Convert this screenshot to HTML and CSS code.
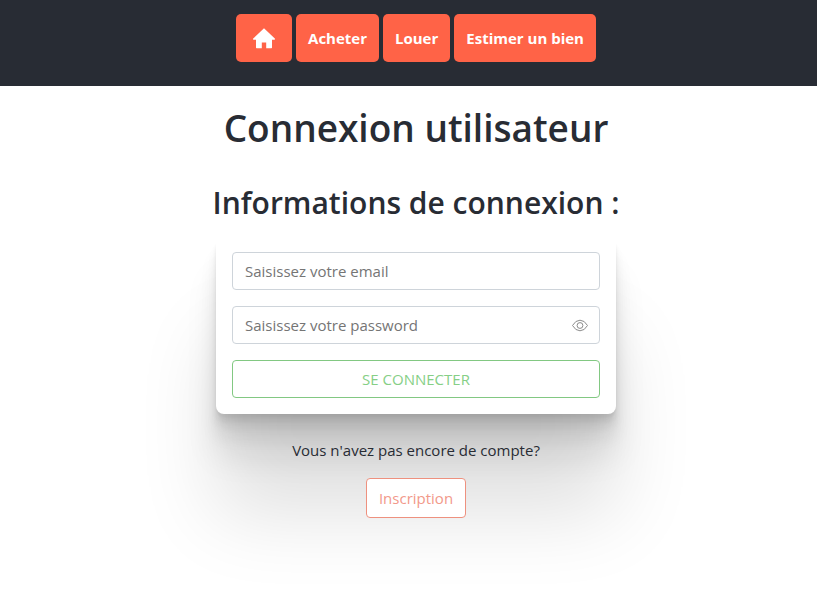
FILE: index.html
```html
<!DOCTYPE html>
<html lang="fr">
<head>
  <meta charset="utf-8">
  <meta name="viewport" content="width=device-width, initial-scale=1">
  <title>Connexion utilisateur</title>
  <link rel="stylesheet" href="styles.css">
</head>
<body>
  <header class="site-header">
    <nav class="nav">
      <a class="nav-link nav-home" href="#" aria-label="Accueil">
        <svg class="home-icon" viewBox="0 0 24 24" aria-hidden="true"><path d="M12 2.2 22.8 12.6Q23.4 13.5 22.3 13.7H20V21.6Q20 22.2 19.4 22.2H14.2V16.6H9.8V22.2H4.6Q4 22.2 4 21.6V13.7H1.7Q.6 13.5 1.2 12.6Z"/></svg>
      </a>
      <a class="nav-link" href="#">Acheter</a>
      <a class="nav-link" href="#">Louer</a>
      <a class="nav-link" href="#">Estimer un bien</a>
    </nav>
  </header>
  <main class="page">
    <h1 class="title">Connexion utilisateur</h1>
    <h2 class="subtitle">Informations de connexion :</h2>
    <form class="card">
      <input class="field" type="email" placeholder="Saisissez votre email" aria-label="Email">
      <div class="password">
        <input class="field" type="password" placeholder="Saisissez votre password" aria-label="Password">
        <button class="reveal" type="button" aria-label="Afficher le mot de passe">
          <svg class="eye-icon" viewBox="0 0 16 16" aria-hidden="true"><path d="M.5 8.500Q3.500 3.200 8 3.200T15.500 8.500Q12.500 13.800 8 13.800T.5 8.500Z"/><circle cx="8" cy="8.500" r="2.900"/></svg>
        </button>
      </div>
      <button class="submit" type="submit">SE CONNECTER</button>
    </form>
    <p class="question">Vous n'avez pas encore de compte?</p>
    <a class="signup" href="#">Inscription</a>
  </main>
</body>
</html>
```
FILE: styles.css
```css
* {
  box-sizing: border-box;
}

body {
  display: flex;
  flex-direction: column;
  min-height: 100vh;
  margin: 0;
  background: #fff;
  color: #282c34;
  font-family: "Segoe UI", "Open Sans", "Noto Sans", sans-serif;
  font-size: 15px;
  line-height: 24px;
}

.site-header {
  padding: 14px 0 24px 15px;
  background: #282c34;
}

.nav {
  display: flex;
  justify-content: center;
  gap: 4px;
}

.nav-link {
  display: flex;
  align-items: center;
  padding: 12px;
  border-radius: 5px;
  background: #ff6347;
  color: #fff;
  font-weight: 700;
  text-decoration: none;
}

.nav-home {
  padding: 12px 16px;
}

.home-icon {
  width: 24px;
  height: 24px;
  fill: #fff;
}

.page {
  display: flex;
  flex: 1;
  flex-direction: column;
  align-items: center;
  padding: 18px 0 24px 15px;
}

.title,
.subtitle {
  margin: 0;
  font-weight: 600;
}

.title {
  font-size: 37px;
  line-height: 48px;
}

.subtitle {
  margin: 32px 0 14px;
  font-size: 30px;
  line-height: 38px;
}

.card {
  display: flex;
  flex-direction: column;
  gap: 16px;
  width: 100%;
  max-width: 400px;
  padding: 16px;
  border-radius: 8px;
  background: #fff;
  box-shadow:
    0 3px 2px rgba(0, 0, 0, 0.034),
    0 7px 5px rgba(0, 0, 0, 0.048),
    0 12px 10px rgba(0, 0, 0, 0.06),
    0 22px 18px rgba(0, 0, 0, 0.072),
    0 42px 33px rgba(0, 0, 0, 0.086),
    0 100px 80px rgba(0, 0, 0, 0.12);
}

.field,
.submit {
  display: block;
  width: 100%;
  height: 38px;
  padding: 6px 12px;
  border: 1px solid #ced4da;
  border-radius: 4px;
  background: #fff;
  font: inherit;
}

.field::placeholder {
  color: #757575;
  opacity: 1;
}

.password {
  position: relative;
}

.password .field {
  padding-right: 40px;
}

.reveal {
  position: absolute;
  top: 0;
  right: 0;
  display: grid;
  place-items: center;
  width: 40px;
  height: 100%;
  padding: 0;
  border: 0;
  background: none;
}

.eye-icon {
  width: 16px;
  height: 16px;
  fill: none;
  stroke: #8c8c8c;
}

.submit {
  border-color: #82c882;
  color: #86cf86;
}

.question {
  margin: 24px 0 16px;
}

.signup {
  padding: 7px 12px;
  border: 1px solid #ee917f;
  border-radius: 4px;
  background: #fff;
  color: #f2998a;
  text-decoration: none;
}
```
